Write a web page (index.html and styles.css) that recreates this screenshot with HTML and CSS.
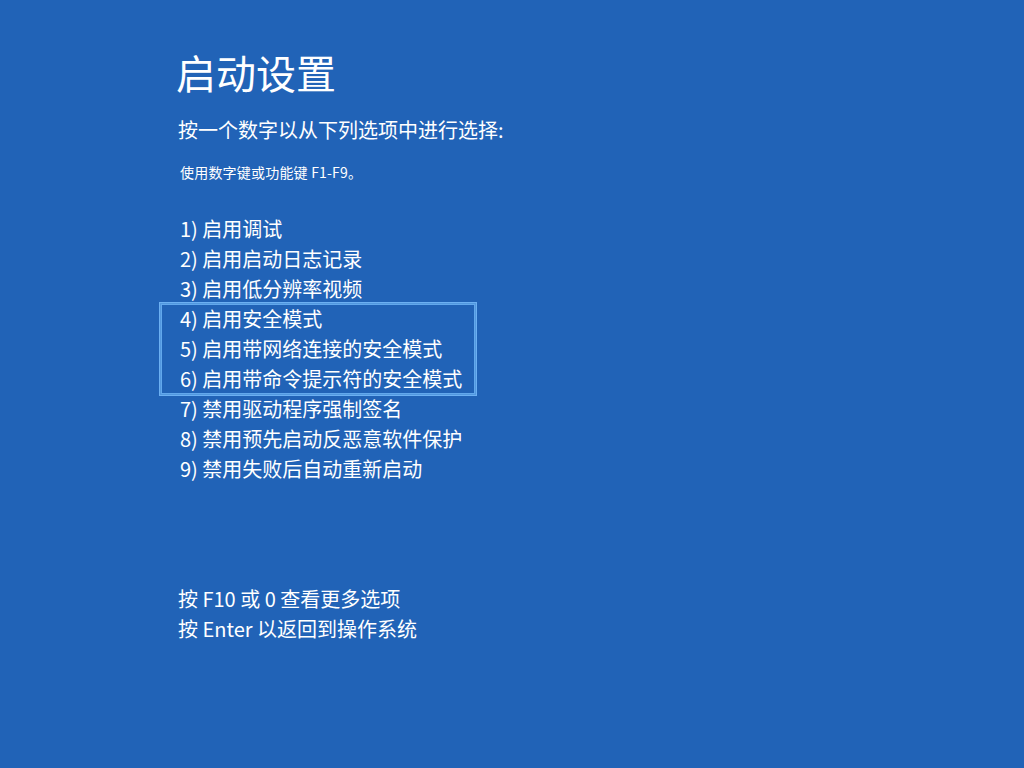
FILE: index.html
```html
<!DOCTYPE html>
<html lang="zh-CN">
<head>
<meta charset="utf-8">
<title>启动设置</title>
<link rel="stylesheet" href="styles.css">
</head>
<body>
<main class="screen">
  <h1 class="title">启动设置</h1>
  <p class="prompt">按一个数字以从下列选项中进行选择:</p>
  <p class="hint">使用数字键或功能键 F1-F9。</p>
  <ul class="options">
    <li>1) 启用调试</li>
    <li>2) 启用启动日志记录</li>
    <li>3) 启用低分辨率视频</li>
    <li class="group">
      <ul class="group-list">
        <li>4) 启用安全模式</li>
        <li>5) 启用带网络连接的安全模式</li>
        <li>6) 启用带命令提示符的安全模式</li>
      </ul>
    </li>
    <li>7) 禁用驱动程序强制签名</li>
    <li>8) 禁用预先启动反恶意软件保护</li>
    <li>9) 禁用失败后自动重新启动</li>
  </ul>
  <div class="footer">
    <p>按 F10 或 0 查看更多选项</p>
    <p>按 Enter 以返回到操作系统</p>
  </div>
</main>
</body>
</html>
```

FILE: styles.css
```css
html, body {
  margin: 0;
  padding: 0;
  background: #2163b7;
}
body {
  width: 1024px;
  height: 768px;
  overflow: hidden;
  color: #ffffff;
  font-family: "Noto Sans CJK SC", "Noto Sans", sans-serif;
}
.screen {
  padding: 48px 0 0 180px;
}
.title {
  margin: 0 0 0 -4px;
  font-size: 40px;
  font-weight: 400;
  line-height: 48px;
  letter-spacing: 0;
}
.prompt {
  margin: 19px 0 0 -2px;
  font-size: 20px;
  line-height: 30px;
}
.hint {
  margin: 17px 0 0 0;
  font-size: 14px;
  line-height: 20px;
  letter-spacing: 0.2px;
}
.options {
  list-style: none;
  margin: 32px 0 0 0;
  padding: 0;
  font-size: 20px;
  line-height: 30px;
}
.options li {
  margin: 0;
  padding: 0;
}
.group-list {
  list-style: none;
  margin: 0 0 0 -19px;
  padding: 0 0 0 19px;
  width: 314px;
  box-sizing: border-box;
  box-shadow: inset 0 0 0 1px #62a8ec, 0 0 0 1px #5298df, 0 0 0 2px #6cb0f2;
}
.footer {
  margin-top: 100px;
  font-size: 20px;
  line-height: 30px;
}
.footer p {
  margin: 0 0 0 -2px;
}
```
